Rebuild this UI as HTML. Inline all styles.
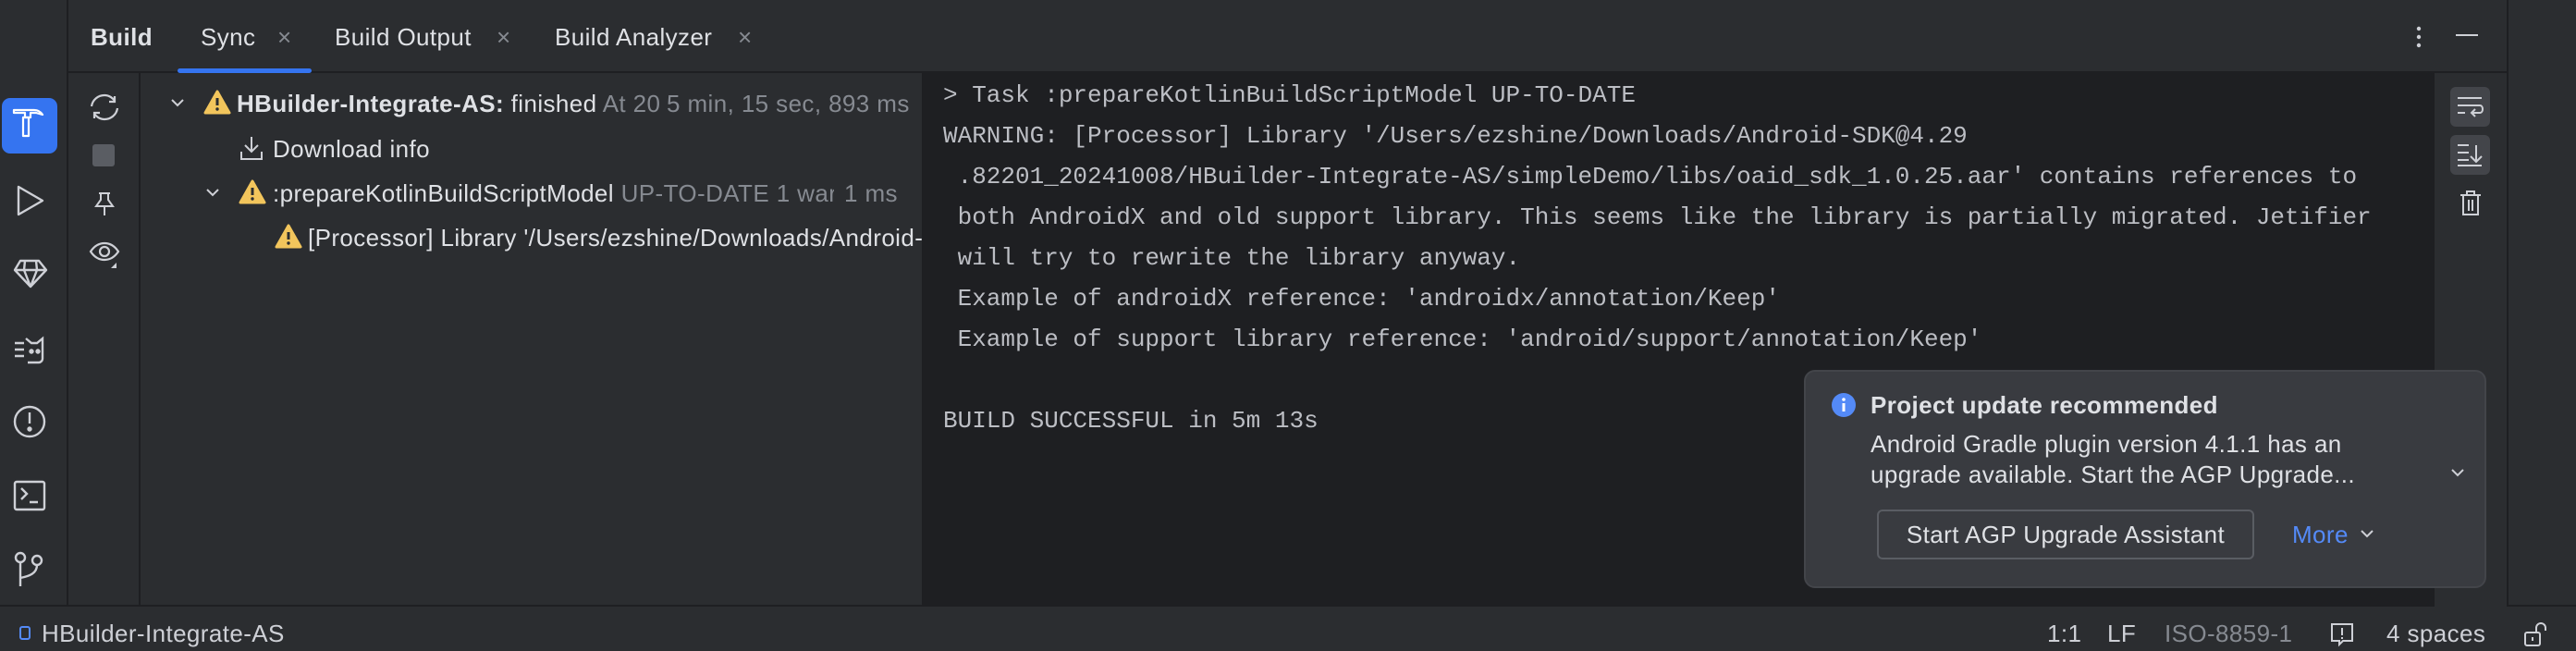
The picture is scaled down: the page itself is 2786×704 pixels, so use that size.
<!DOCTYPE html>
<html><head><meta charset="utf-8"><style>
*{margin:0;padding:0;box-sizing:border-box}
body{width:2786px;height:704px;background:#2b2d30;position:relative;overflow:hidden;font-family:"Liberation Sans",sans-serif;color:#dfe1e5}
.a{position:absolute;white-space:nowrap}
.t{font-size:26px;line-height:30px;letter-spacing:0.4px}
.m{font-family:"Liberation Mono",monospace;font-size:26px;color:#bcbec4;line-height:30px;letter-spacing:0;white-space:pre}
.g{color:#868a91}
svg{position:absolute;overflow:visible}
</style></head><body>
<!-- panels -->
<div class="a" style="left:72px;top:0;width:2px;height:656px;background:#1e1f22"></div>
<div class="a" style="left:74px;top:77px;width:2637px;height:2px;background:#1e1f22"></div>
<div class="a" style="left:150px;top:79px;width:2px;height:577px;background:#1e1f22"></div>
<div class="a" style="left:997px;top:79px;width:1636px;height:577px;background:#1e1f22"></div>
<div class="a" style="left:2711px;top:0;width:2px;height:656px;background:#1e1f22"></div>
<div class="a" style="left:0;top:654px;width:2786px;height:2px;background:#1e1f22"></div>

<!-- tabs -->
<div class="a t" style="left:98px;top:25px;font-weight:bold">Build</div>
<div class="a t" style="left:217px;top:25px">Sync</div>
<div class="a t g" style="left:300px;top:25px">×</div>
<div class="a t" style="left:362px;top:25px">Build Output</div>
<div class="a t g" style="left:537px;top:25px">×</div>
<div class="a t" style="left:600px;top:25px">Build Analyzer</div>
<div class="a t g" style="left:798px;top:25px">×</div>
<div class="a" style="left:192px;top:74px;width:145px;height:5px;background:#3574f0;border-radius:3px"></div>
<svg style="left:2612px;top:28px" width="8" height="26"><circle cx="4" cy="3" r="2.2" fill="#ced0d6"/><circle cx="4" cy="12" r="2.2" fill="#ced0d6"/><circle cx="4" cy="21" r="2.2" fill="#ced0d6"/></svg>
<div class="a" style="left:2656px;top:37px;width:24px;height:2px;background:#ced0d6"></div>

<!-- left sidebar -->
<div class="a" style="left:2px;top:106px;width:60px;height:60px;background:#3574f0;border-radius:9px"></div>
<svg style="left:14px;top:116px" width="40" height="40" fill="none" stroke="#fff" stroke-width="2.2" stroke-linejoin="round"><path d="M1 3h22c4 0 7 2 9 5l-7-2h-6v5h-6V6H1z"/><path d="M11 11h6v20h-6z"/></svg>
<svg style="left:18px;top:200px" width="30" height="34" fill="none" stroke="#ced0d6" stroke-width="2.4" stroke-linejoin="round"><path d="M2 2v30l26-15z"/></svg>
<svg style="left:14px;top:280px" width="38" height="32" fill="none" stroke="#ced0d6" stroke-width="2.4" stroke-linejoin="round"><path d="M8 2h20l8 10-17 18L2 12zM2 12h34M12 12l7 18 7-18M13 2l-1 10M25 2l1 10"/></svg>
<svg style="left:14px;top:362px" width="36" height="32" fill="none" stroke="#ced0d6" stroke-width="2.4"><path d="M14 4l6 5h6l6-5v22c0 2-2 4-4 4H16M2 9h10M2 16h10M2 23h10"/><circle cx="20" cy="18" r="1.5" fill="#ced0d6"/><circle cx="27" cy="18" r="1.5" fill="#ced0d6"/></svg>
<svg style="left:14px;top:438px" width="36" height="36" fill="none" stroke="#ced0d6" stroke-width="2.4"><circle cx="18" cy="18" r="16"/><path d="M18 8v12"/><circle cx="18" cy="26" r="1.5" fill="#ced0d6"/></svg>
<svg style="left:14px;top:519px" width="36" height="34" fill="none" stroke="#ced0d6" stroke-width="2.4"><rect x="2" y="2" width="32" height="30" rx="2"/><path d="M9 9l6 6-6 6M18 24h9"/></svg>
<svg style="left:14px;top:596px" width="36" height="40" fill="none" stroke="#ced0d6" stroke-width="2.4"><circle cx="8" cy="7" r="5"/><circle cx="26" cy="10" r="5"/><path d="M8 12v26M26 15c0 9-8 12-18 14"/></svg>

<!-- tool column -->
<svg style="left:96px;top:101px" width="34" height="30" fill="none" stroke="#ced0d6" stroke-width="2.2"><path d="M3 14c1-7 7-12 14-12 5 0 9 3 11 6M31 16c-1 7-7 12-14 12-5 0-9-3-11-6"/><path d="M28 3v6h-6M6 27v-6h6"/></svg>
<div class="a" style="left:100px;top:156px;width:24px;height:24px;background:#5a5d63;border-radius:3px"></div>
<svg style="left:102px;top:207px" width="22" height="28" fill="none" stroke="#ced0d6" stroke-width="2"><path d="M5 2h12M7 2v7l-5 7h18l-5-7V2M11 16v10"/></svg>
<svg style="left:96px;top:260px" width="36" height="30" fill="none" stroke="#ced0d6" stroke-width="2.2"><path d="M2 12c4-6 9-9 15-9s11 3 15 9c-4 6-9 9-15 9S6 18 2 12z"/><circle cx="17" cy="12" r="5"/><path d="M30 30h-6l6-6z" fill="#ced0d6" stroke="none"/></svg>

<!-- tree -->
<svg style="left:184px;top:106px" width="16" height="12" fill="none" stroke="#ced0d6" stroke-width="2"><path d="M2 2l6 6 6-6"/></svg>
<svg style="left:220px;top:97px" width="30" height="28"><path d="M15 2L28 25H2z" fill="#f2c55c" stroke="#f2c55c" stroke-width="3" stroke-linejoin="round"/><path d="M15 9v8" stroke="#2b2d30" stroke-width="3"/><circle cx="15" cy="21" r="1.7" fill="#2b2d30"/></svg>
<div class="a t" style="left:256px;top:97px;width:458px;overflow:hidden"><b>HBuilder-Integrate-AS:</b> finished <span class="g">At 2024/10/8</span></div>
<div class="a t g" style="left:721px;top:97px">5 min, 15 sec, 893 ms</div>
<svg style="left:259px;top:146px" width="26" height="28" fill="none" stroke="#ced0d6" stroke-width="2"><path d="M13 2v16M6 11l7 7 7-7M2 18v8h22v-8"/></svg>
<div class="a t" style="left:295px;top:146px">Download info</div>
<svg style="left:222px;top:203px" width="16" height="12" fill="none" stroke="#ced0d6" stroke-width="2"><path d="M2 2l6 6 6-6"/></svg>
<svg style="left:258px;top:194px" width="30" height="28"><path d="M15 2L28 25H2z" fill="#f2c55c" stroke="#f2c55c" stroke-width="3" stroke-linejoin="round"/><path d="M15 9v8" stroke="#2b2d30" stroke-width="3"/><circle cx="15" cy="21" r="1.7" fill="#2b2d30"/></svg>
<div class="a t" style="left:295px;top:194px;width:607px;overflow:hidden">:prepareKotlinBuildScriptModel <span class="g">UP-TO-DATE 1 warning</span></div>
<div class="a t g" style="left:913px;top:194px">1 ms</div>
<svg style="left:297px;top:242px" width="30" height="28"><path d="M15 2L28 25H2z" fill="#f2c55c" stroke="#f2c55c" stroke-width="3" stroke-linejoin="round"/><path d="M15 9v8" stroke="#2b2d30" stroke-width="3"/><circle cx="15" cy="21" r="1.7" fill="#2b2d30"/></svg>
<div class="a t" style="left:333px;top:242px;width:664px;overflow:hidden">[Processor] Library '/Users/ezshine/Downloads/Android-SDK</div>

<!-- console -->
<div class="a m" style="left:1020px;top:88px">&gt; Task :prepareKotlinBuildScriptModel UP-TO-DATE</div>
<div class="a m" style="left:1020px;top:132px">WARNING: [Processor] Library '/Users/ezshine/Downloads/Android-SDK@4.29</div>
<div class="a m" style="left:1020px;top:176px"> .82201_20241008/HBuilder-Integrate-AS/simpleDemo/libs/oaid_sdk_1.0.25.aar' contains references to</div>
<div class="a m" style="left:1020px;top:220px"> both AndroidX and old support library. This seems like the library is partially migrated. Jetifier</div>
<div class="a m" style="left:1020px;top:264px"> will try to rewrite the library anyway.</div>
<div class="a m" style="left:1020px;top:308px"> Example of androidX reference: 'androidx/annotation/Keep'</div>
<div class="a m" style="left:1020px;top:352px"> Example of support library reference: 'android/support/annotation/Keep'</div>
<div class="a m" style="left:1020px;top:440px">BUILD SUCCESSFUL in 5m 13s</div>

<!-- right strip -->
<div class="a" style="left:2633px;top:79px;width:78px;height:577px;background:#2b2d30"></div>
<div class="a" style="left:2650px;top:94px;width:43px;height:43px;background:#43454a;border-radius:6px"></div>
<div class="a" style="left:2650px;top:146px;width:43px;height:43px;background:#43454a;border-radius:6px"></div>
<svg style="left:2657px;top:104px" width="30" height="24" fill="none" stroke="#ced0d6" stroke-width="2"><path d="M1 2h26M1 10h24c4 0 4 8 0 8h-8M20 14l-4 4 4 4M1 18h8"/></svg>
<svg style="left:2657px;top:155px" width="30" height="26" fill="none" stroke="#ced0d6" stroke-width="2"><path d="M1 2h12M1 10h12M1 18h12M1 24h26M21 2v18M15 14l6 6 6-6"/></svg>
<svg style="left:2660px;top:205px" width="24" height="30" fill="none" stroke="#ced0d6" stroke-width="2"><path d="M1 6h22M8 6V2h8v4M4 6v21h16V6M10 11v12M14 11v12"/></svg>

<!-- notification -->
<div class="a" style="left:1951px;top:400px;width:738px;height:236px;background:#393b40;border:2px solid #43454a;border-radius:12px"></div>
<svg style="left:1981px;top:425px" width="26" height="26"><circle cx="13" cy="13" r="13" fill="#548af7"/><rect x="11.5" y="11" width="3" height="9" fill="#fff"/><circle cx="13" cy="7" r="1.8" fill="#fff"/></svg>
<div class="a t" style="left:2023px;top:423px;font-weight:bold">Project update recommended</div>
<div class="a t" style="left:2023px;top:465px">Android Gradle plugin version 4.1.1 has an</div>
<div class="a t" style="left:2023px;top:498px">upgrade available. Start the AGP Upgrade...</div>
<svg style="left:2650px;top:506px" width="16" height="12" fill="none" stroke="#ced0d6" stroke-width="2"><path d="M2 2l6 6 6-6"/></svg>
<div class="a t" style="left:2030px;top:551px;width:408px;height:54px;border:2px solid #5a5d63;border-radius:6px;text-align:center;line-height:50px">Start AGP Upgrade Assistant</div>
<div class="a t" style="left:2479px;top:563px;color:#548af7">More</div>
<svg style="left:2552px;top:572px" width="16" height="12" fill="none" stroke="#ced0d6" stroke-width="2"><path d="M2 2l6 6 6-6"/></svg>

<!-- status bar -->
<div class="a" style="left:21px;top:677px;width:12px;height:15px;border:2px solid #548af7;border-radius:3px"></div>
<div class="a t" style="left:45px;top:670px;color:#ced0d6">HBuilder-Integrate-AS</div>
<div class="a t" style="left:2214px;top:670px;color:#ced0d6">1:1</div>
<div class="a t" style="left:2279px;top:670px;color:#ced0d6">LF</div>
<div class="a t g" style="left:2341px;top:670px">ISO-8859-1</div>
<svg style="left:2520px;top:673px" width="26" height="26" fill="none" stroke="#ced0d6" stroke-width="2"><path d="M2 2h22v18H14l-4 4v-4H2z"/><path d="M13 6v8M13 16v2"/></svg>
<div class="a t" style="left:2581px;top:670px;color:#ced0d6">4 spaces</div>
<svg style="left:2730px;top:672px" width="28" height="28" fill="none" stroke="#ced0d6" stroke-width="2"><rect x="1" y="12" width="16" height="14" rx="2"/><path d="M13 12V7a5 5 0 0 1 10 0v3M9 17v4"/></svg>
</body></html>
